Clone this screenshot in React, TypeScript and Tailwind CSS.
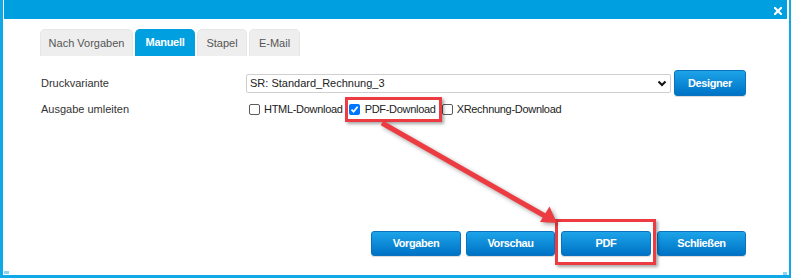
import { useState } from "react";

const tabs = [
  { label: "Nach Vorgaben", w: "w-[93px]" },
  { label: "Manuell", w: "w-[60px]" },
  { label: "Stapel", w: "w-[50px]" },
  { label: "E-Mail", w: "w-[51px]" },
];

const Checkbox = ({ checked, onChange }) => (
  <button
    onClick={onChange}
    className={
      checked
        ? "w-[11px] h-[11px] rounded-[2px] bg-[#0075ff] flex items-center justify-center shrink-0"
        : "w-[11px] h-[11px] rounded-[2px] border border-[#5b5b5b] bg-white shrink-0"
    }
  >
    {checked && (
      <svg width="9" height="9" viewBox="0 0 9 9">
        <path d="M1.5 4.6 L3.6 6.7 L7.6 1.8" fill="none" stroke="white" strokeWidth="1.8" />
      </svg>
    )}
  </button>
);

const BlueButton = ({ children, w }) => (
  <button
    className={`${w} h-[25px] rounded-[3px] border border-[#0b72bd] bg-gradient-to-b from-[#1da4e8] to-[#0072c6] text-white font-bold text-[11px] tracking-[-0.4px] shadow-[0_1px_1px_rgba(0,0,0,0.15)]`}
  >
    {children}
  </button>
);

export default function App() {
  const [activeTab, setActiveTab] = useState("Manuell");
  const [output, setOutput] = useState({ html: false, pdf: true, xr: false });

  return (
    <div className="relative w-[791px] h-[278px] bg-white font-['Liberation_Sans',Arial,sans-serif]">
      <div className="w-full h-full flex flex-col border-l-[3px] border-r-[2px] border-b-[3px] border-[#10a9e8] pl-px pr-[2px]">
        {/* title bar */}
        <div className="h-[19px] shrink-0 bg-[#009fe0] flex justify-end items-start pt-[7px] pr-[5px]">
          <svg width="8" height="8" viewBox="0 0 8 8">
            <path d="M1 1 L7 7 M7 1 L1 7" stroke="white" strokeWidth="2.2" strokeLinecap="square" />
          </svg>
        </div>

        <div className="flex-1 flex flex-col pl-[36px] pr-[41px]">
          {/* tabs */}
          <div className="flex gap-[2px] mt-[10px]">
            {tabs.map((t) => (
              <button
                key={t.label}
                onClick={() => setActiveTab(t.label)}
                className={
                  activeTab === t.label
                    ? `${t.w} h-[27px] rounded-t-[5px] bg-[#009fe0] text-white font-bold text-[11px] tracking-[-0.3px]`
                    : `${t.w} h-[27px] rounded-t-[5px] bg-[#eeeeee] border border-b-0 border-[#e6e6e6] text-[#555555] text-[11px]`
                }
              >
                {t.label}
              </button>
            ))}
          </div>

          {/* Druckvariante */}
          <div className="flex items-center mt-[14px] h-[26px] pl-px">
            <div className="w-[205px] text-[11px] text-[#333333]">Druckvariante</div>
            <div className="w-[425px] h-[19px] border border-[#cfcfcf] rounded-[2px] flex items-center justify-between pl-[3px] pr-[3px]">
              <span className="text-[11px] text-[#222222]">SR: Standard_Rechnung_3</span>
              <svg width="10" height="7" viewBox="0 0 10 7">
                <path d="M1.5 1.5 L5 5 L8.5 1.5" fill="none" stroke="#111" strokeWidth="2" />
              </svg>
            </div>
            <div className="ml-[3px]">
              <BlueButton w="w-[72px] h-[26px]">Designer</BlueButton>
            </div>
          </div>

          {/* Ausgabe umleiten */}
          <div className="flex items-center mt-[4px] h-[18px] pl-px">
            <div className="w-[208px] text-[11px] text-[#333333]">Ausgabe umleiten</div>
            <div className="flex items-center gap-[6px] text-[11px] tracking-[-0.3px] text-[#222222]">
              <label className="flex items-center gap-[4px]">
                <Checkbox checked={output.html} onChange={() => setOutput({ ...output, html: !output.html })} />
                HTML-Download
              </label>
              <label className="flex items-center gap-[5px]">
                <Checkbox checked={output.pdf} onChange={() => setOutput({ ...output, pdf: !output.pdf })} />
                PDF-Download
              </label>
              <label className="flex items-center gap-[4px]">
                <Checkbox checked={output.xr} onChange={() => setOutput({ ...output, xr: !output.xr })} />
                XRechnung-Download
              </label>
            </div>
          </div>

          {/* buttons */}
          <div className="mt-auto mb-[19px] flex justify-end gap-[5px]">
            <BlueButton w="w-[90px]">Vorgaben</BlueButton>
            <BlueButton w="w-[89px]">Vorschau</BlueButton>
            <BlueButton w="w-[90px] ml-px">PDF</BlueButton>
            <BlueButton w="w-[89px] ml-px">Schließen</BlueButton>
          </div>
        </div>
      </div>

      {/* resize grips */}
      <span className="absolute left-[4px] top-[271px] w-[5px] h-[3px] bg-[#8dd3f3]" />
      <span className="absolute left-[783px] top-[272px] w-[4px] h-[3px] bg-[#8dd3f3]" />

      {/* annotations */}
      <div className="absolute left-[345px] top-[97px] w-[97px] h-[25px] border-[3px] border-[#ec3b41] shadow-[2px_2px_3px_rgba(0,0,0,0.35)] pointer-events-none" />
      <div className="absolute left-[555px] top-[219px] w-[101px] h-[46px] border-[3px] border-[#ec3b41] shadow-[2px_2px_3px_rgba(0,0,0,0.35)] pointer-events-none" />
      <svg
        className="absolute left-0 top-0 pointer-events-none drop-shadow-[2px_2px_2px_rgba(0,0,0,0.35)]"
        width="791"
        height="278"
        viewBox="0 0 791 278"
      >
        <line x1="382" y1="123" x2="545" y2="216" stroke="#ec3b41" strokeWidth="5" />
        <polygon points="557,223 540,222 549.5,206.5" fill="#ec3b41" />
      </svg>
    </div>
  );
}
